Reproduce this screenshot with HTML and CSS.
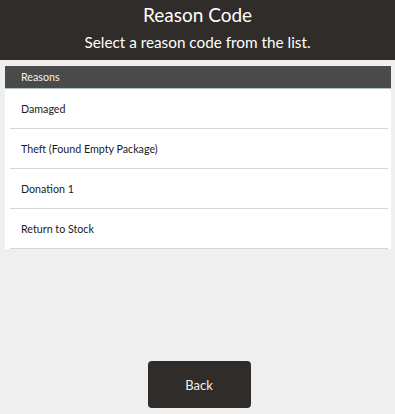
FILE: index.html
```html
<!DOCTYPE html>
<html>
<head>
<meta charset="utf-8">
<link rel="stylesheet" href="styles.css">
</head>
<body>
<div class="page">
  <header class="top">
    <div class="title">Reason Code</div>
    <div class="subtitle">Select a reason code from the list.</div>
  </header>
  <section class="panel">
    <div class="panel-head">Reasons</div>
    <div class="row">Damaged</div>
    <div class="row">Theft (Found Empty Package)</div>
    <div class="row">Donation 1</div>
    <div class="row">Return to Stock</div>
  </section>
  <div class="spacer"></div>
  <div class="actions">
    <button class="back">Back</button>
  </div>
</div>
</body>
</html>
```
FILE: styles.css
```css
html, body {
  margin: 0;
  padding: 0;
}
body {
  background: #efefef;
  font-family: Lato, "Open Sans", sans-serif;
  color: #1a1a1a;
}
.page {
  width: 395px;
  height: 414px;
  display: flex;
  flex-direction: column;
}
.top {
  background: #2f2c29;
  color: #fff;
  height: 60px;
  display: flex;
  flex-direction: column;
  align-items: center;
  box-sizing: border-box;
  padding-top: 2px;
}
.title {
  font-size: 19px;
  line-height: 26px;
}
.subtitle {
  font-size: 15.3px;
  line-height: 29px;
}
.panel {
  margin: 6px 4px 0 5px;
  background: #fff;
}
.panel-head {
  background: #4a4a4a;
  color: #f0f0f0;
  font-size: 10.7px;
  height: 22px;
  line-height: 22px;
  padding-left: 16px;
  border-bottom: 1px solid #a9c3c0;
}
.row {
  height: 39px;
  line-height: 39px;
  font-size: 10.7px;
  border-bottom: 1px solid #d6d6d6;
  margin: 0 3px 0 5px;
  padding-left: 11px;
}
.spacer {
  flex: 1;
}
.actions {
  display: flex;
  justify-content: center;
  padding-bottom: 6px;
  padding-left: 3px;
}
.back {
  width: 103px;
  height: 47px;
  background: #2f2c29;
  color: #f2f2f2;
  border: none;
  border-radius: 4px;
  font-family: Lato, "Open Sans", sans-serif;
  font-size: 13px;
}
```
